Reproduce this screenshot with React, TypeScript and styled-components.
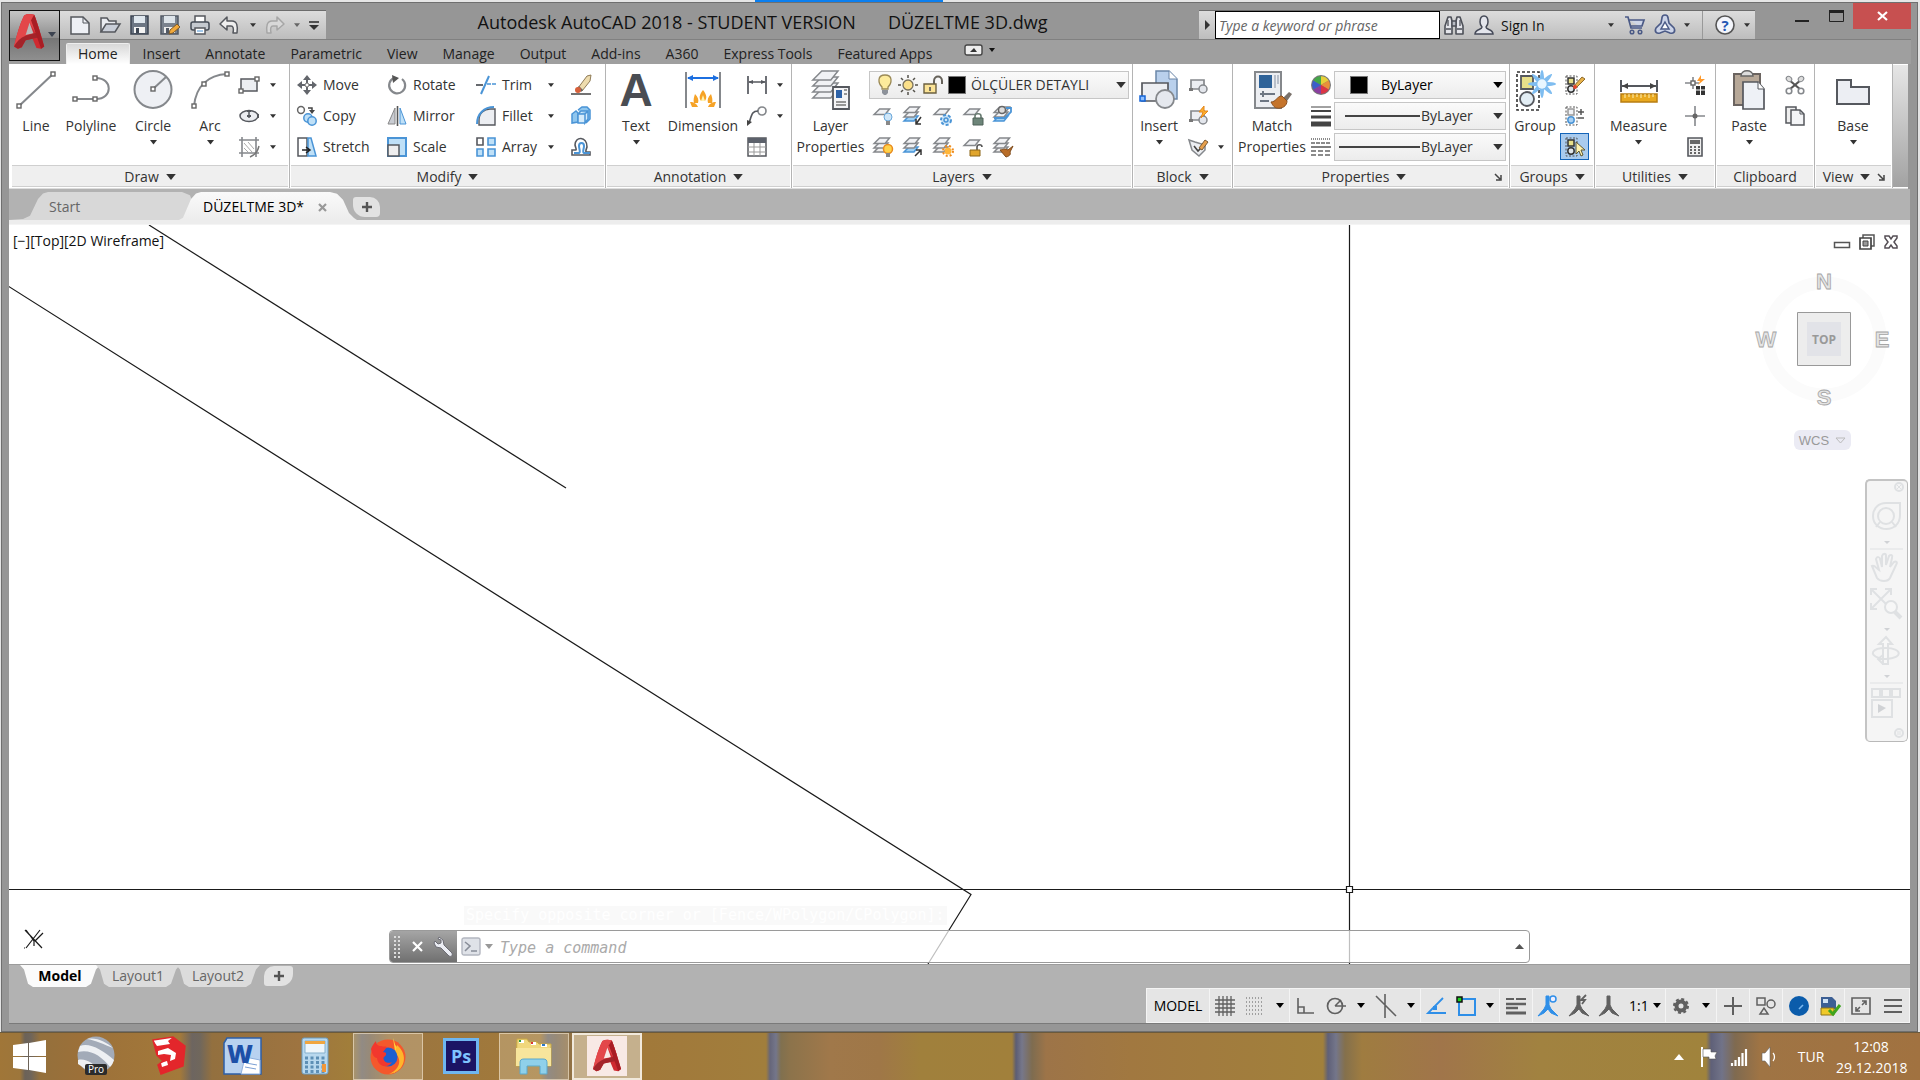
import React from "react";
import styled, { createGlobalStyle, css } from "styled-components";

const ui = `"Open Sans", "Noto Sans", "Liberation Sans", sans-serif`;
const mono = `"DejaVu Sans Mono", "Liberation Mono", monospace`;

const Global = createGlobalStyle`
  *, *::before, *::after { box-sizing: border-box; }
  body { margin: 0; background: #e4e4e4; font-family: ${ui}; font-size: 14px; color: #333; }
  button, input, select { font: inherit; color: inherit; margin: 0; padding: 0; border: 0; background: none; border-radius: 0; }
  svg { display: block; flex: none; overflow: visible; }
`;

/* ---------- shell ---------- */
const Screen = styled.div`
  min-height: 100vh;
  display: flex;
  flex-direction: column;
  background: linear-gradient(90deg, #e6e6e6 755px, #0a7ff0 755px 943px, #e6e6e6 943px) top / 100% 2px no-repeat, #e4e4e4;
`;
const Win = styled.main`
  flex: 1;
  display: flex;
  flex-direction: column;
  margin: 2px 2px 0 1px;
  padding: 0 7px 7px;
  border: 1px solid #6f6f6f;
  background: #969696;
`;
const Header = styled.header`
  display: grid;
  grid-template-columns: 51px 1fr;
  grid-template-rows: 37px 24px;
  margin-right: -1px;
  background: linear-gradient(#969696 36px, #808080 36px 37px, #9f9f9f 37px);
`;
const AppButton = styled.button`
  grid-row: 1 / span 2;
  align-self: end;
  height: 51px;
  margin-bottom: 3px;
  border: 1px solid #111;
  background: linear-gradient(#c6c6c6, #8d8d8d 55%, #767676 56%, #8f8f8f);
  display: flex;
  align-items: flex-start;
  gap: 3px;
  padding: 2px 0 0 4px;
  > svg:last-child { margin-top: 19px; }
`;
const TitleRow = styled.div`
  display: flex;
  align-items: stretch;
  padding-top: 7px;
`;
const barFill = css`
  background: linear-gradient(#dcdcdc, #bdbdbd);
  border-top: 1px solid #6c6c6c;
`;
const QuickAccess = styled.nav`
  ${barFill}
  width: 266px;
  height: 29px;
  display: flex;
  align-items: center;
  padding-left: 8px;
`;
const Tool = styled.button<{ $w?: number }>`
  width: ${(p) => p.$w ?? 30}px;
  height: 28px;
  display: flex;
  align-items: center;
  justify-content: center;
`;
const Title = styled.h1`
  flex: 1;
  margin: 0;
  font-size: 18px;
  line-height: 24px;
  font-weight: 400;
  color: #111;
  display: flex;
  justify-content: center;
  gap: 32px;
  white-space: nowrap;
`;
const InfoCenter = styled.div`
  ${barFill}
  width: 556px;
  height: 29px;
  display: flex;
  align-items: center;
`;
const Search = styled.input`
  width: 225px;
  height: 28px;
  border: 1px solid #000;
  background: #fff;
  padding: 0 3px;
  &::placeholder { color: #666; font-style: italic; opacity: 1; }
`;
const SignIn = styled.button`
  width: 124px;
  height: 28px;
  padding: 0 10px 0 1px;
  display: flex;
  align-items: center;
  justify-content: space-between;
  color: #111;
`;
const InfoDivider = styled.span`
  width: 1px;
  height: 28px;
  background: #999;
  margin: 0 8px 0 12px;
`;
const WindowButtons = styled.div`
  display: flex;
  height: 26px;
  margin: -7px 0 0 30px;
`;
const WindowButton = styled.button<{ $close?: boolean }>`
  width: ${(p) => (p.$close ? 58 : 34)}px;
  display: flex;
  align-items: center;
  justify-content: center;
  background: ${(p) => (p.$close ? "#c75050" : "transparent")};
`;
const RibbonTabs = styled.nav`
  display: flex;
  align-items: flex-end;
  gap: 1px;
  padding-left: 6px;
`;
const RibbonTab = styled.button<{ $on?: boolean }>`
  height: 21px;
  padding: 0 12px;
  line-height: 20px;
  color: #222;
  ${(p) => p.$on && css`background: linear-gradient(#d8d8d8, #fff); border: 1px solid #eee; border-bottom: 0; border-radius: 2px 2px 0 0; padding: 0 11px;`}
`;

/* ---------- ribbon ---------- */
const Ribbon = styled.section`
  display: flex;
  height: 125px;
  margin-right: 2px;
  background: #fff;
  border-bottom: 1px solid #ddd;
`;
const RibbonRest = styled.div`
  flex: 1;
  margin: 1px 0;
  background: linear-gradient(#e6e6e6, #a2a2a2);
`;
const PanelBox = styled.section<{ $w: number }>`
  width: ${(p) => p.$w}px;
  display: grid;
  grid-template-rows: 101px 22px;
  border-right: 1px solid #b4b4b4;
  &:first-child { padding-left: 2px; }
`;
const PanelBody = styled.div`
  display: flex;
  padding: 5px 0 3px;
`;
const PanelTitle = styled.footer`
  margin: 0 1px;
  background: #efefef;
  border-top: 1px solid #cfcfcf;
  border-bottom: 1px solid #cfcfcf;
  display: flex;
  align-items: center;
`;
const PanelMenu = styled.button`
  flex: 1;
  display: flex;
  align-items: center;
  justify-content: center;
  gap: 7px;
  padding-top: 2px;
  line-height: 18px;
`;
const Launcher = styled.button`
  width: 14px;
  padding-top: 2px;
`;
const Big = styled.button<{ $w: number }>`
  width: ${(p) => p.$w}px;
  display: flex;
  flex-direction: column;
  align-items: center;
  line-height: 20px;
  gap: 1px;
`;
const BigIcon = styled.span`
  height: 46px;
  padding-top: 1px;
  display: flex;
  align-items: flex-start;
`;
const BigMore = styled.span`
  padding-top: 3px;
`;
const Column = styled.div<{ $w?: number }>`
  width: ${(p) => (p.$w ? p.$w + "px" : "auto")};
  display: grid;
  grid-template-rows: repeat(3, 31px);
`;
const Small = styled.button`
  display: flex;
  align-items: center;
  gap: 6px;
  white-space: nowrap;
`;
const Split = styled.div`
  display: flex;
  align-items: center;
  justify-content: space-between;
`;
const Toggle = styled.button`
  width: 29px;
  height: 27px;
  display: flex;
  align-items: center;
  justify-content: center;
  border: 1px solid #1464b8;
  background: #a9cbee;
`;
const Center = styled.button`
  display: flex;
  align-items: center;
  justify-content: center;
`;
const Row = styled.div`
  display: flex;
  align-items: center;
`;
const Combo = styled.label<{ $pad?: number }>`
  position: relative;
  flex: 1;
  height: 28px;
  display: flex;
  align-items: center;
  gap: 5px;
  padding-left: ${(p) => p.$pad ?? 0}px;
  border: 1px solid #c6c6c6;
  background: linear-gradient(#fafafa, #ececec);
`;
const ComboSelect = styled.select<{ $dark?: boolean }>`
  flex: 1;
  min-width: 0;
  height: 26px;
  appearance: none;
  outline: 0;
  color: ${(p) => (p.$dark ? "#000" : "#333")};
`;
const ComboArrow = styled.span`
  position: absolute;
  right: 2px;
  top: 10px;
  pointer-events: none;
`;
const Swatch = styled.i<{ $wide?: boolean }>`
  width: 18px;
  height: 18px;
  background: #000;
  outline: 1px solid #777;
  outline-offset: -1px;
  margin-right: ${(p) => (p.$wide ? 8 : 0)}px;
`;
const Rule = styled.i<{ $w: number }>`
  width: ${(p) => p.$w}px;
  height: 2px;
  background: #444;
  margin-right: -4px;
`;

/* ---------- file tabs ---------- */
const FileTabs = styled.nav`
  height: 36px;
  background: linear-gradient(#b2b2b2 31px, #ededed 31px);
  border-bottom: 1px solid #f4f4f4;
  display: flex;
  align-items: flex-start;
  padding-top: 3px;
`;
const FileTab = styled.div<{ $on?: boolean }>`
  height: 28px;
  width: ${(p) => (p.$on ? 178 : 184)}px;
  margin-left: ${(p) => (p.$on ? -14 : 0)}px;
  padding: ${(p) => (p.$on ? "2px 30px 0 24px" : "2px 30px 0 40px")};
  display: flex;
  align-items: center;
  justify-content: space-between;
  background: ${(p) => (p.$on ? "linear-gradient(#fafafa, #ededed)" : "#d8d8d8")};
  color: ${(p) => (p.$on ? "#000" : "#666")};
  clip-path: ${(p) =>
    p.$on
      ? "polygon(0 100%, 4px 92%, 12px 25%, 17px 5%, 22px 0, calc(100% - 27px) 0, calc(100% - 20px) 6%, calc(100% - 14px) 28%, calc(100% - 8px) 75%, calc(100% - 3px) 93%, 100% 100%)"
      : "polygon(0 100%, 14px 96%, 21px 85%, 29px 25%, 34px 5%, 39px 0, calc(100% - 11px) 0, calc(100% - 3px) 12%, 100% 40%, 100% 100%)"};
`;
const PlainButton = styled.button`
  line-height: 20px;
  white-space: nowrap;
`;
const AddFile = styled.button`
  width: 27px;
  height: 20px;
  margin: 5px 0 0 -4px;
  border-radius: 3px 10px 4px 12px;
  background: #e2e2e2;
  display: flex;
  align-items: center;
  justify-content: center;
`;

/* ---------- drawing area ---------- */
const Canvas = styled.section`
  position: relative;
  flex: 1;
  min-height: 600px;
  background: #fff;
  overflow: hidden;
`;
const Drawing = styled.svg`
  position: absolute;
  inset: 0;
  width: 100%;
  height: 100%;
`;
const ViewLabel = styled.button`
  position: absolute;
  left: 4px;
  top: 6px;
  line-height: 20px;
  color: #111;
`;
const ViewButtons = styled.div`
  position: absolute;
  right: 12px;
  top: 8px;
  display: flex;
  gap: 9px;
`;
const Compass = styled.div`
  position: absolute;
  right: 16px;
  top: 44px;
`;
const Wcs = styled.button`
  position: absolute;
  right: 59px;
  top: 205px;
  width: 57px;
  height: 20px;
  border-radius: 6px;
  background: #ebebf4;
  color: #999;
  font: 13px "Liberation Sans", sans-serif;
  display: flex;
  align-items: center;
  justify-content: center;
  gap: 6px;
`;
const NavBar = styled.nav`
  position: absolute;
  right: 2px;
  top: 254px;
  width: 43px;
  height: 263px;
  border: 1px solid #b9b9b9;
  border-left: 2px solid #c4c4c4;
  border-top: 2px solid #c4c4c4;
  border-radius: 5px;
  background: #f5f5f5;
`;
const History = styled.output`
  position: absolute;
  left: 455px;
  bottom: 39px;
  height: 19px;
  padding: 0 2px;
  font: 15px/19px ${mono};
  color: #fff;
  background: #f9f9f9;
`;
const CommandBar = styled.form`
  position: absolute;
  left: 380px;
  right: 380px;
  bottom: 1px;
  height: 33px;
  display: flex;
  align-items: center;
  border: 1px solid #9a9a9a;
  border-radius: 4px;
  overflow: hidden;
  background: rgba(255, 255, 255, 0.72);
`;
const CommandGrip = styled.div`
  width: 67px;
  height: 31px;
  display: flex;
  align-items: center;
  justify-content: space-between;
  padding: 0 4px;
  background: linear-gradient(#a5a5a5, #707070);
`;
const CommandInput = styled.input`
  flex: 1;
  height: 31px;
  outline: 0;
  font: italic 15px ${mono};
  padding: 2px 0 0 7px;
  &::placeholder { color: #aaa; opacity: 1; }
`;

/* ---------- bottom of the window ---------- */
const Bottom = styled.footer`
  height: 60px;
  background: #b2b2b2;
  border-bottom: 1px solid #7a7a7a;
  border-top: 1px solid #9c9c9c;
  display: flex;
  justify-content: space-between;
`;
const LayoutTabs = styled.nav`
  display: flex;
  padding-left: 11px;
`;
const LayoutTab = styled.button<{ $on?: boolean }>`
  height: 22px;
  width: ${(p) => (p.$on ? 80 : 84)}px;
  margin-right: -4px;
  line-height: 20px;
  font-weight: ${(p) => (p.$on ? 700 : 400)};
  color: ${(p) => (p.$on ? "#000" : "#666")};
  background: ${(p) => (p.$on ? "#fbfbfb" : "#dcdcdc")};
  clip-path: polygon(0 0, 100% 0, calc(100% - 4px) 20%, calc(100% - 9px) 85%, calc(100% - 14px) 100%, 13px 100%, 8px 85%, 4px 20%);
`;
const AddLayout = styled.button`
  width: 29px;
  height: 20px;
  margin: 1px 0 0 8px;
  border-radius: 10px 3px 12px 3px;
  background: #e2e2e2;
  display: flex;
  align-items: center;
  justify-content: center;
`;
const StatusBar = styled.div`
  align-self: flex-end;
  height: 35px;
  display: flex;
  gap: 1px;
  background: #f4f4f4;
  border: 1px solid #f4f4f4;
  color: #000;
`;
const StatusGroup = styled.div<{ $w: number }>`
  width: ${(p) => p.$w}px;
  display: flex;
  align-items: center;
  justify-content: space-around;
  background: #e5e5e5;
`;
const StatusButton = styled.button`
  display: flex;
  align-items: center;
  gap: 4px;
  height: 30px;
`;

/* ---------- taskbar ---------- */
const TaskBar = styled.footer`
  height: 48px;
  border-top: 1px solid #6b5a3c;
  display: flex;
  align-items: stretch;
  color: #fff;
  background: linear-gradient(90deg,
    #a07638 0, #9d763b 20px, #6b6258 25px, #6f655a 31px, #94703c 40px, #9c7039 80px, #a3793a 180px,
    #6d6560 192px, #70675c 200px, #93703f 212px, #9e7440 300px, #a17e3a 350px, #6e6a6c 362px, #77695a 370px, #9b7540 390px,
    #a27a3a 540px, #6e6a6c 548px, #77695a 556px, #a17738 580px, #a17a3b 680px, #a17e3c 766px, #66667a 770px, #74768a 776px, #80704f 781px, #8c734b 790px,
    #a0784a 830px, #9f7747 880px, #a0803c 920px, #a1803b 1012px, #5c5d74 1016px, #76778a 1022px, #7e6c50 1032px, #9d7448 1046px,
    #a17840 1130px, #a1803b 1323px, #5f6078 1328px, #74768a 1336px, #84704c 1345px, #9f7c40 1362px, #a0754a 1440px, #a18240 1540px, #a0833c 1706px,
    #5f6078 1711px, #717388 1722px, #7f6a50 1735px, #9f7444 1760px, #a17240 1920px);
`;
const Start = styled.button`
  width: 61px;
  display: flex;
  align-items: center;
  padding: 0 0 1px 13px;
`;
const Task = styled.button<{ $state?: "open" | "active" }>`
  width: 70px;
  margin-right: 3px;
  padding-bottom: 2px;
  border: 0 solid transparent;
  display: flex;
  align-items: center;
  justify-content: center;
  ${(p) => p.$state === "open" && css`background: rgba(230, 215, 190, 0.3); border: 1px solid rgba(240, 225, 200, 0.65);`}
  ${(p) => p.$state === "active" && css`background: #c5b08d; border: 2px solid #f1e9dc;`}
`;
const Tray = styled.div`
  margin-left: auto;
  display: flex;
  align-items: center;
  padding-right: 14px;
`;
const Lang = styled.button`
  width: 50px;
  line-height: 20px;
  margin-left: 2px;
`;
const Clock = styled.time`
  width: 70px;
  line-height: 21px;
  text-align: center;
`;

/* ---------- icons ---------- */
const Ic = ({ w = 20, h = 20, children }: { w?: number; h?: number; children: React.ReactNode }) => (
  <svg width={w} height={h} viewBox={`0 0 ${w} ${h}`} fill="none" aria-hidden="true">{children}</svg>
);
const Down = ({ s = 8, c = "#333" }: { s?: number; c?: string }) => (
  <svg width={s} height={s / 2 + 1} viewBox="0 0 8 5" aria-hidden="true"><path d="M0 0h8L4 5z" fill={c} /></svg>
);
const Node = ({ x, y }: { x: number; y: number }) => (
  <rect x={x - 2} y={y - 2} width="4" height="4" fill="#fff" stroke="#666" strokeWidth="1.4" />
);
const g = "#85888c";
const dk = "#55585e";
const bl = "#4a94d6";
const lb = "#bfe0f7";

const LogoShape = ({ hole }: { hole: string }) => (
  <>
    <path d="M13 3Q18 0 26 2Q29 8 39 43L35 46L29 45L24 33L15 35L10 44L5 46L0 43Q6 17 13 3Z" fill="#cf2a30" />
    <path d="M13 3Q18 0 26 2L33 22L28 26L20 12L14 33L10 44L5 46L0 43Q6 17 13 3Z" fill="#e3474a" />
    <path d="M20 12L25 26L15 28Z" fill={hole} />
    <path d="M0 43Q5 33 15 29L30 25L33 31L15 35L10 44L5 46Z" fill="#a3242a" />
    <path d="M26 2Q29 8 39 43L35 46L22 9Z" fill="#a81d24" />
  </>
);
const LogoA = () => (
  <svg width="31" height="36" viewBox="0 0 40 46" aria-hidden="true"><LogoShape hole="#b9b9b9" /></svg>
);
const PageI = () => <Ic><path d="M1 2h12l6 6v11H1z" fill="#eef0f5" stroke={dk} strokeWidth="1.5" /><path d="M13 2v6h6" stroke={dk} /></Ic>;
const OpenI = () => <Ic><path d="M1 17V3h6l2 3h7v3" fill="#e9ebf0" stroke={dk} strokeWidth="1.5" /><path d="M1 17L6 9h14l-5 8z" fill="#c9ced8" stroke={dk} strokeWidth="1.5" /></Ic>;
const SaveShape = () => <><path d="M1 1h17v18H1z" fill="#6c7684" stroke="#3d4653" strokeWidth="1.5" /><path d="M4 1h11v7H4z" fill="#dfe7ee" /><path d="M4 12h11v6H4z" fill="#f4f4f4" /><path d="M6 13h3v5H6z" fill="#3d4653" /></>;
const SaveI = () => <Ic><SaveShape /></Ic>;
const SaveAsI = () => <Ic><g opacity=".85"><SaveShape /></g><path d="M9 19l1-4 7-6 3 3-7 6z" fill="#f2a93b" stroke="#7c5a2a" /></Ic>;
const PrintI = () => <Ic><path d="M5 7V1h10v6" fill="#fff" stroke={dk} strokeWidth="1.5" /><rect x="1" y="7" width="18" height="8" rx="2" fill="#c5c9cf" stroke="#444b55" strokeWidth="1.5" /><path d="M5 13h10v6H5z" fill="#fff" stroke={dk} strokeWidth="1.5" /><path d="M7 16h6" stroke={bl} /></Ic>;
const undoPath = "M1 9l7-7v4h5c5 0 6 5 5 12h-4c1-5 0-7-2-7H8v4z";
const UndoI = () => <Ic><path d={undoPath} fill="#eee" stroke={dk} strokeWidth="1.5" strokeLinejoin="round" /></Ic>;
const RedoI = () => <Ic><g transform="matrix(-1 0 0 1 20 0)"><path d={undoPath} fill="#d8d8d8" stroke="#a6a6a6" strokeWidth="1.5" strokeLinejoin="round" /></g></Ic>;
const BinocI = () => <Ic><path d="M4 2h3l1 4v13H1v-8zM16 2h-3l-1 4v13h7v-8z" fill="#e4e5ea" stroke="#4d5058" strokeWidth="1.6" strokeLinejoin="round" /><path d="M8 6h4v5H8z" fill="#b9bcc4" stroke="#4d5058" strokeWidth="1.4" /><path d="M2 14h5M13 14h5M4 5v6M16 5v6" stroke="#4d5058" strokeWidth="1.3" /></Ic>;
const UserI = () => <Ic><path d="M6 7c0-8 8-8 8 0 0 3-1 4-2 5 0 3 7 2 7 7H1c0-5 7-4 7-7-1-1-2-2-2-5z" fill="#e3e5ec" stroke="#454a58" strokeWidth="1.5" /></Ic>;
const CartI = () => <Ic><path d="M0 2h3l3 11h11M4 5h15l-2 6H6" fill="#cfd6e8" stroke="#4b5a86" strokeWidth="1.7" /><circle cx="7" cy="17" r="1.8" stroke="#4b5a86" strokeWidth="1.5" /><circle cx="15" cy="17" r="1.8" stroke="#4b5a86" strokeWidth="1.5" /></Ic>;
const ShareI = () => <Ic><path d="M7 3c0-4 6-4 6 0l1 5 5 5c2 4-1 6-4 5l-5-2-5 2c-3 1-6-1-4-5l5-5z" fill="#ccd4e8" stroke="#4b5a86" strokeWidth="1.6" /><path d="M10 7l4 7H6z" fill="#fff" stroke="#4b5a86" strokeWidth="1.5" /></Ic>;
const HelpI = () => <Ic><circle cx="10" cy="10" r="9" fill="#f3f5fb" stroke="#555" strokeWidth="1.6" /><text x="10" y="15.5" textAnchor="middle" fontFamily="Open Sans" fontWeight="700" fontSize="15" fill="#2456b4">?</text></Ic>;

const LineI = () => <Ic w={40} h={40}><path d="M3 36L37 4" stroke={g} strokeWidth="2" /><Node x={3} y={36} /><Node x={37} y={4} /></Ic>;
const PolyI = () => <Ic w={40} h={40}><path d="M5 29h20c17 0 17-21 0-21" stroke={g} strokeWidth="2" /><Node x={4} y={29} /><Node x={24} y={29} /><Node x={24} y={8} /></Ic>;
const CircleI = () => <Ic w={40} h={40}><circle cx="20" cy="19.5" r="18.5" fill="#eef0f4" stroke={g} strokeWidth="2" /><path d="M20 19L33 7" stroke={g} strokeWidth="2" /><Node x={20} y={19} /></Ic>;
const ArcI = () => <Ic w={40} h={40}><path d="M4 36C6 16 18 5 37 4" stroke={g} strokeWidth="2" /><Node x={4} y={36} /><Node x={14} y={14} /><Node x={37} y={4} /></Ic>;
const RectI = () => <Ic><path d="M2 4h16v12H2z" fill="#eceef2" stroke={dk} strokeWidth="1.5" /><Node x={18} y={4} /><Node x={2} y={16} /></Ic>;
const EllI = () => <Ic><ellipse cx="10" cy="10" rx="9" ry="5.5" fill="#eceef2" stroke={dk} strokeWidth="1.5" /><path d="M10 12V5" stroke={dk} strokeWidth="1.5" /><path d="M8 10h4M19 8v4M8 5h4" stroke={dk} strokeWidth="2" /></Ic>;
const HatchI = () => <Ic><path d="M3 0v20M17 0v20M0 3h20M0 16h20" stroke={g} strokeWidth="1.6" /><path d="M5 6l8 9M9 5l6 7M5 11l4 4" stroke="#aaa" /><path d="M20 9c-1 5-4 9-9 11" stroke="#777" strokeWidth="1.4" /></Ic>;

const MoveI = () => <Ic><path d="M10 0l4 5h-3v4h4V6l5 4-5 4v-3h-4v4h3l-4 5-4-5h3v-4H5v3l-5-4 5-4v3h4V5H6z" fill="#63666c" /><circle cx="10" cy="10" r="2" fill="#fff" stroke="#777" /></Ic>;
const CopyI = () => <Ic><circle cx="4" cy="4" r="3.4" stroke="#666" strokeWidth="1.5" /><circle cx="11" cy="12" r="4.2" fill={lb} stroke={bl} strokeWidth="1.5" /><circle cx="15" cy="15" r="4.2" fill={lb} stroke={bl} strokeWidth="1.5" /><path d="M11 2h4v3" stroke="#444" strokeWidth="1.5" /><path d="M12 4h6l-3 4z" fill="#444" /></Ic>;
const StretchI = () => <Ic><path d="M1 1h9v18H1z" fill="#fff" stroke={dk} strokeWidth="1.5" /><path d="M11 1h3l5 18h-8z" fill={lb} stroke={bl} strokeWidth="1.5" /><path d="M5 13h7m-3-3l4 3-4 3" stroke="#222" strokeWidth="1.5" /></Ic>;
const RotateI = () => <Ic><path d="M7 3a8 8 0 1 0 8 1" stroke={g} strokeWidth="2.2" /><path d="M5 0l7 3-6 5z" fill="#555" /></Ic>;
const MirrorI = () => <Ic><path d="M8 2v16H1z" fill="#c9ccd2" stroke="#888" /><path d="M13 2v16h6z" fill={lb} stroke={bl} /><path d="M10.500 0v20" stroke="#555" strokeWidth="1.6" /></Ic>;
const ScaleI = () => <Ic><path d="M1 1h18v18H1z" fill={lb} stroke={bl} strokeWidth="2" /><path d="M1 8h11v11H1z" fill="#eee" stroke={dk} strokeWidth="1.5" /></Ic>;
const TrimI = () => <Ic><path d="M0 10h7" stroke={dk} strokeWidth="1.8" /><path d="M5 19L13 1" stroke={bl} strokeWidth="2" /><path d="M11 9h4m1 0h4" stroke={bl} strokeWidth="1.6" /></Ic>;
const FilletI = () => <Ic><path d="M3 19V14C3 7 8 3 14 3h5v16z" fill="#eceef2" stroke={dk} strokeWidth="1.4" /><path d="M1 18C1 8 8 1 18 1" stroke={bl} strokeWidth="2" /></Ic>;
const ArrayI = () => <Ic><path d="M1 1h6v7H1z" fill="#fff" stroke={dk} strokeWidth="1.6" /><path d="M12 1h7v7h-7zM1 12h6v7H1zM12 12h7v7h-7z" fill={lb} stroke={bl} strokeWidth="1.6" /></Ic>;
const EraseI = () => <Ic><path d="M7 13L16 1l4-1-1 6-8 10z" fill="#eedcae" stroke="#8f7b57" /><path d="M8 11l4 4-2 2-4-4z" fill="#666" /><circle cx="7" cy="15" r="3" fill="#d8603a" /><path d="M0 19h20" stroke="#444" strokeWidth="1.5" /></Ic>;
const ExplodeI = () => <Ic><path d="M1 8l4-3 2 2v9l-6 1zM7 4l4-3h5l3 3v9l-4 4" fill="#8fc6ee" stroke={bl} strokeWidth="1.5" /><path d="M7 8h7v9H7zM14 8l3-3v8l-3 4zM7 8l3-3h7" fill="#d4ebfb" stroke={bl} strokeWidth="1.5" /></Ic>;
const OffsetI = () => <Ic><path d="M1 18h18v-3h-3c-2 0-1-2 0-5C16-1 4-1 4 8c1 4 2 5 0 5H1z" stroke={dk} strokeWidth="1.6" /><path d="M3 16h5c2-1 0-4 0-7 0-4 5-4 5 0 0 3-2 6 0 7h6" stroke={bl} strokeWidth="2" /></Ic>;

const TextI = () => <Ic w={40} h={40}><text x="20" y="36" textAnchor="middle" fontFamily="Liberation Sans" fontWeight="700" fontSize="46" fill="#4a4d53">A</text></Ic>;
const DimI = () => <Ic w={40} h={40}><path d="M3 2v36M37 2v36" stroke={g} strokeWidth="2" /><path d="M5 8h30" stroke="#1c6fe0" strokeWidth="2" /><path d="M4 8l6-3v6zM36 8l-6-3v6z" fill="#1c6fe0" /><path d="M20 20c4 5 4 8 2 11h-4c-2-3-2-6 2-11zM12 24c3 3 4 6 3 9h-4c-1-3 0-6 1-9zM28 24c-3 3-4 6-3 9h4c1-3 0-6-1-9zM7 32c4 0 7 2 8 5H9zM33 32c-4 0-7 2-8 5h6z" fill="#f6a327" /><path d="M20 25l2 6h-4z" fill="#fff3b0" /></Ic>;
const HDimI = () => <Ic><path d="M1 1v18M19 1v18M2 7h16" stroke={dk} strokeWidth="1.7" /><path d="M1 7l5-2v4zM19 7l-5-2v4z" fill={dk} /></Ic>;
const LeaderI = () => <Ic><circle cx="15" cy="5" r="4" stroke={g} strokeWidth="1.7" /><path d="M11 5C5 5 5 8 2 17" stroke={dk} strokeWidth="1.7" /><path d="M0 20l0-6 5 2z" fill="#444" /></Ic>;
const TableI = () => <Ic><path d="M1 1h18v18H1z" fill="#fff" stroke={dk} strokeWidth="1.5" /><path d="M1 1h18v5H1z" fill="#5c616b" /><path d="M7 6v13M13 6v13M1 10h18M1 15h18" stroke="#999" /></Ic>;

const sheet = (y: number, k: number, fill = "#f1f2f5", stroke = g) => <path d={`M${1 * k} ${y + 5 * k}L${6 * k} ${y}H${15 * k}L${11 * k} ${y + 5 * k}Z`} fill={fill} stroke={stroke} strokeWidth="1.5" />;
const LayerPropI = () => <Ic w={40} h={40}>{sheet(19, 1.8)}{sheet(13, 1.8)}{sheet(7, 1.8)}{sheet(1, 1.8)}<path d="M22 17h16v22H22z" fill="#f4f4f6" stroke={dk} strokeWidth="1.8" /><path d="M25 20h6v8h-6z" fill="#2d62a8" /><path d="M33 20h3M33 24h3M25 32h10M25 35h10" stroke="#777" strokeWidth="1.4" /></Ic>;
const LayerI = ({ n, kind, blue }: { n: number; kind: string; blue?: boolean }) => (
  <Ic>
    {n === 3 && sheet(10, 1, blue ? "#9ed0f4" : "#eee", blue ? bl : g)}
    {n === 3 && sheet(6, 1)}
    {sheet(n === 3 ? 1 : 3, 1.1)}
    {kind === "off" && <><circle cx="15" cy="11" r="4" fill="#cfe6f8" stroke="#6aa7da" /><path d="M13 15h4v4h-4z" fill="#888" /></>}
    {kind === "on" && <><circle cx="15" cy="12" r="4.500" fill="#ffd24a" stroke="#e98b1e" strokeWidth="1.5" /><path d="M13 16h4v4h-4z" fill="#888" /></>}
    {kind === "in" && <path d="M18 11l-5 7m0-5v5h5" stroke="#333" strokeWidth="1.5" />}
    {kind === "out" && <path d="M12 19l6-6m-5 0h5v5" stroke="#333" strokeWidth="1.5" />}
    {kind === "freeze" && <><circle cx="13" cy="14" r="5" fill="#cde5f7" stroke={bl} strokeWidth="2" strokeDasharray="3 2" /><circle cx="13" cy="14" r="2" stroke={bl} strokeWidth="1.5" /></>}
    {kind === "sun" && <><circle cx="15" cy="14" r="5" stroke="#f08a1c" strokeWidth="2" strokeDasharray="2 2" /><circle cx="15" cy="14" r="3.5" fill="#ffb63a" /></>}
    {kind === "lock" && <><path d="M12 13v-3c0-3 6-3 6 0v3" stroke="#667a70" strokeWidth="1.6" /><path d="M10 12h10v7H10z" fill="#6d8579" stroke="#4f6158" /></>}
    {kind === "unlock" && <><path d="M14 14v-4c0-3 5-3 5 0" stroke="#555" strokeWidth="1.6" /><path d="M7 13h10v6H7z" fill="#e0a52c" stroke="#8a6417" /></>}
    {kind === "brush" && <path d="M20 9l-5 4c-4-2-5 0-8 0l6 7c4-1 5-3 4-5z" fill="#b96d28" stroke="#7d4a1b" />}
    {kind === "cur" && <><circle cx="9" cy="4" r="3.500" fill="#ddd" stroke="#666" strokeWidth="1.5" /><path d="M1 12h11l6-6V2h-5" stroke={bl} strokeWidth="1.8" /></>}
  </Ic>
);
const BulbI = () => <Ic w={16} h={22}><path d="M8 1c8 0 7 8 3 12v2H5v-2C1 9 0 1 8 1z" fill="#fdeb9c" stroke="#9b8a57" strokeWidth="1.3" /><path d="M5 16h6v3l-2 2H7l-2-2z" fill="#8d929a" /></Ic>;
const SunI = () => <Ic><circle cx="10" cy="10" r="5" fill="#fbe08a" stroke="#77705c" strokeWidth="1.3" /><path d="M10 0v3M10 17v3M0 10h3M17 10h3M3 3l2 2M15 15l2 2M3 17l2-2M15 5l2-2" stroke="#55534c" strokeWidth="1.5" /></Ic>;
const UnlockI = () => <Ic><path d="M11 9V6c0-6 8-6 8 0v3" stroke="#66625a" strokeWidth="2" /><path d="M1 9h12v9H1z" fill="#fbe396" stroke="#6b6040" strokeWidth="1.4" /><path d="M7 12v4" stroke="#555" strokeWidth="1.6" /></Ic>;

const InsertI = () => <Ic w={40} h={40}><path d="M17 1h13l8 8v20H17z" fill="#b9d0ec" stroke="#6b86a8" strokeWidth="1.5" /><path d="M30 1v8h8" fill="#fff" stroke="#6b86a8" /><path d="M3 13h26v18H3z" fill="#eceef2" stroke={dk} strokeWidth="1.7" /><circle cx="26" cy="29" r="9" fill="#e5e8ee" stroke={g} strokeWidth="1.8" /><path d="M1 26h5v5H1z" fill="#8fc0ff" stroke="#1464d8" strokeWidth="1.500" /></Ic>;
const BlockI = ({ kind }: { kind: string }) => (
  <Ic>{kind === "attr"
    ? <><path d="M1 3l3 10 7 6 6-6V8L7 5z" fill="#eceef2" stroke={g} strokeWidth="1.5" /><path d="M6 9l4 5 3-3" stroke="#444" strokeWidth="1.6" /><path d="M11 11l6-8 3 2-6 8z" fill="#e7a04c" stroke="#7b5a33" /></>
    : <><path d="M3 5h13v9H3z" fill="#eceef2" stroke={g} strokeWidth="1.7" /><circle cx="15" cy="14" r="4" fill="#e3e6ec" stroke={g} strokeWidth="1.5" /><path d="M1 13h4v3H1z" fill="#777" />{kind === "new" && <path d="M16 0l-5 6h4l-2 6 7-7h-4z" fill="#ffae2b" stroke="#e1861c" />}</>}
  </Ic>
);
const MatchI = () => <Ic w={40} h={40}><path d="M3 2h26v36H3z" fill="#eceef2" stroke={g} strokeWidth="2" /><path d="M7 5h13v13H7z" fill="#2f6399" /><path d="M23 5v13M26 5v9" stroke="#b8bfca" strokeWidth="2" /><path d="M8 24h15M11 21v6M8 31h9" stroke="#6d7683" strokeWidth="2" /><path d="M31 28l6-6 3 2-5 7z" fill="#79716a" /><path d="M19 32c5 0 6-6 11-6l5 5c0 5-5 8-10 7-2 0-4-2-6-6z" fill="#c5742b" stroke="#8a4f1e" /></Ic>;
const WheelI = () => {
  const c = ["#e7d03a", "#e9913a", "#dc3545", "#8a3fa0", "#3b5fc9", "#44a848"];
  return <Ic><circle cx="10" cy="10" r="10" fill="#777" />{c.map((f, i) => {
    const a = ((i * 60 - 90) * Math.PI) / 180, b = a + Math.PI / 3;
    return <path key={f} fill={f} d={`M10 10L${10 + 8.8 * Math.cos(a)} ${10 + 8.8 * Math.sin(a)}A8.8 8.8 0 0 1 ${10 + 8.8 * Math.cos(b)} ${10 + 8.8 * Math.sin(b)}Z`} />;
  })}</Ic>;
};
const WeightI = () => <Ic><path d="M0 1h20" stroke="#444" strokeWidth="1" /><path d="M0 5h20" stroke="#444" strokeWidth="2" /><path d="M0 11h20" stroke="#444" strokeWidth="3" /><path d="M0 18h20" stroke="#444" strokeWidth="5" /></Ic>;
const TypeI = () => <Ic><path d="M0 2h20" stroke="#666" strokeWidth="1.5" strokeDasharray="1 1" /><path d="M0 6h20" stroke="#666" strokeWidth="1.5" strokeDasharray="4 1" /><path d="M0 10h20" stroke="#555" strokeWidth="1.5" /><path d="M0 14h20M0 18h20" stroke="#666" strokeWidth="1.5" strokeDasharray="5 2" /></Ic>;

const Star = ({ x, y, r }: { x: number; y: number; r: number }) => <>{[0, 45, 90, 135].map((a) => <ellipse key={a} cx={x} cy={y} rx={r} ry={r / 6} fill="#7fbdf0" transform={`rotate(${a} ${x} ${y})`} />)}<circle cx={x} cy={y} r={r / 3} fill="#e8f6ff" /></>;
const GroupI = () => <Ic w={40} h={40}><path d="M2 2h22v38H2z" stroke="#333" strokeWidth="1.6" strokeDasharray="3 2" /><path d="M6 6h12v13H6z" fill="#e8e08a" stroke={dk} strokeWidth="1.8" /><circle cx="12" cy="29" r="7" fill="#e3eef5" stroke={dk} strokeWidth="1.8" /><Star x={27} y={14} r={14} /></Ic>;
const GroupSmI = ({ kind }: { kind: string }) => (
  <Ic>
    <path d="M1 1h11v18H1z" stroke="#555" strokeDasharray="2 1.500" />
    <path d="M3 3h6v6H3z" fill={kind === "pm" ? "#e4e8ee" : "#e8e08a"} stroke="#333" strokeWidth="1.5" opacity={kind === "pm" ? 0.5 : 1} />
    <circle cx="6" cy="14" r="3.200" fill={kind === "pm" ? "#a9d0f2" : "#dfe5ea"} stroke={kind === "pm" ? bl : "#333"} strokeWidth="1.5" />
    {kind === "edit" && <path d="M8 12L17 2l3 2-9 9z" fill="#e8b24a" stroke="#8d6a2c" />}
    {kind === "edit" && <circle cx="10" cy="12" r="2" fill="#e3452f" />}
    {kind === "pm" && <path d="M13 6h6M16 3v6M13 12h6" stroke="#555" strokeWidth="1.5" />}
    {kind === "sel" && <path d="M11 5v12l3-3 2 5 2-1-2-5h4z" fill="#fff3b0" stroke="#5d5633" />}
  </Ic>
);
const MeasureI = () => <Ic w={40} h={40}><path d="M2 10v12M38 10v12M3 16h34" stroke={dk} strokeWidth="2" /><path d="M3 16l6-3v6zM37 16l-6-3v6z" fill="#444" /><path d="M2 24h36v8H2z" fill="#e9a91f" stroke="#b87d12" strokeWidth="1.5" /><path d="M6 24v4M10 24v3M14 24v4M18 24v3M22 24v4M26 24v3M30 24v4M34 24v3" stroke="#fff0b5" /></Ic>;
const QuickI = () => <Ic><path d="M0 8h14M8 2v12" stroke={g} strokeWidth="1.6" /><Node x={8} y={8} /><path d="M16 0l-4 6h3l-2 4 7-6h-4z" fill="#ff9a2b" /><path d="M11 11h9v9h-9z" fill="#333" /><path d="M15.500 11v9M11 15h9" stroke="#fff" /></Ic>;
const PointI = () => <Ic><path d="M0 10h20M10 0v20" stroke={g} strokeWidth="1.6" /><circle cx="10" cy="10" r="2.500" fill="#666" /></Ic>;
const CalcSmI = () => <Ic><path d="M3 1h14v18H3z" fill="#eee" stroke={dk} strokeWidth="1.6" /><path d="M5 3h10v4H5z" fill="#666" /><path d="M5 10h10M5 13h10M5 16h10" stroke="#666" strokeWidth="2" strokeDasharray="2 2" /></Ic>;
const PasteI = () => <Ic w={40} h={40}><path d="M5 4h26v31H5z" fill="#b7a898" stroke="#6b6460" strokeWidth="2" /><path d="M12 6c0-7 12-7 12 0z" fill="#ddd" stroke="#666" strokeWidth="1.5" /><path d="M14 12h15l6 7v20H14z" fill="#eef1f6" stroke={dk} strokeWidth="1.7" /><path d="M29 12v7h6" fill="#fff" stroke={dk} /></Ic>;
const CutI = () => <Ic><path d="M3 4l13 11M17 4L4 15" stroke="#555" strokeWidth="2.2" /><ellipse cx="4" cy="4" rx="3" ry="2.400" transform="rotate(40 4 4)" fill="#ddd" stroke={g} /><ellipse cx="16" cy="4" rx="3" ry="2.400" transform="rotate(-40 16 4)" fill="#ddd" stroke={g} /><circle cx="4" cy="16" r="2.800" fill="#fff" stroke={g} strokeWidth="1.6" /><circle cx="16" cy="16" r="2.800" fill="#fff" stroke={g} strokeWidth="1.6" /></Ic>;
const DupI = () => <Ic><path d="M1 1h10v16H1z" fill="#eee" stroke={dk} strokeWidth="1.5" /><path d="M6 4h9l4 4v11H6z" fill="#f4f5f7" stroke={dk} strokeWidth="1.5" /><path d="M15 4v4h4" stroke={dk} /></Ic>;
const BaseI = () => <Ic w={40} h={40}><path d="M4 10h14v7h18v17H4z" fill="#eceef3" stroke={dk} strokeWidth="2" /></Ic>;
const Launch = () => <Ic w={8} h={8}><path d="M1 1l5 5M7 2v5H2" stroke="#444" strokeWidth="1.5" /></Ic>;
const Plus = () => <Ic w={12} h={12}><path d="M6 1v10M1 6h10" stroke="#555" strokeWidth="2.4" /></Ic>;

/* ---------- parts ---------- */
const Panel = ({ w, name, menu = true, launch, children }: { w: number; name: string; menu?: boolean; launch?: boolean; children: React.ReactNode }) => (
  <PanelBox $w={w} aria-label={name}>
    <PanelBody>{children}</PanelBody>
    <PanelTitle>
      <PanelMenu>{name}{menu && <Down s={10} />}</PanelMenu>
      {launch && <Launcher aria-label={`${name} settings`}><Launch /></Launcher>}
    </PanelTitle>
  </PanelBox>
);
const BigTool = ({ w, icon, label, more, second }: { w: number; icon: React.ReactNode; label: string; more?: boolean; second?: string }) => (
  <Big $w={w}>
    <BigIcon>{icon}</BigIcon>
    <span>{label}</span>
    {more && <BigMore><Down s={7} /></BigMore>}
    {second && <span>{second}</span>}
  </Big>
);
const Pair = ({ label, icon, name }: { label?: string; icon: React.ReactNode; name: string }) => (
  <Split><Small aria-label={name}>{icon}{label}</Small><button aria-label={`${name} options`}><Down s={6} /></button></Split>
);
const GapCol = styled(Column)<{ $left: number }>`
  margin-left: ${(p) => p.$left}px;
`;
const LayerStack = styled.div`
  width: 260px;
  display: grid;
  grid-template-rows: repeat(3, 31px);
`;
const IconStrip = styled.div`
  display: flex;
  align-items: center;
  gap: 10px;
  padding-left: 4px;
`;
const PropRows = styled.div`
  width: 195px;
  display: grid;
  grid-template-rows: repeat(3, 31px);
  ${Row} { gap: 3px; }
`;

const st = "#606060";
const on = "#2f8fe8";
const Anno = ({ c, kind }: { c: string; kind?: number }) => <Ic w={22} h={24}><path d="M9 2h3v9l2 4 7 7-7-3-3-4-4 4-6 3 6-7 2-4z" fill={c} stroke={c} />{kind === 1 && <circle cx="16" cy="5" r="3" fill="#eef" stroke={c} strokeWidth="1.5" />}{kind === 2 && <path d="M18 1l-5 5h4l-3 4" stroke={c} strokeWidth="1.8" />}</Ic>;

const NavDrawing = () => (
  <svg width="40" height="259" viewBox="0 0 40 259" fill="none" stroke="#dfe1e3" strokeWidth="2" role="img" aria-label="Navigation tools">
    <circle cx="32" cy="6" r="4" /><path d="M30 4l4 4M34 4l-4 4" strokeWidth="1" />
    <path d="M19 22h14v12c0 19-27 18-27 1C6 27 12 22 19 22z" /><circle cx="19" cy="35" r="8" /><path d="M13 41l-4 5M25 41l4 5" />
    <path d="M17 60h6l-3 3z" fill="#d0d2d5" stroke="none" /><path d="M3 68h33" strokeWidth="1" />
    <path d="M5 85c3-1 4 2 7 4l-3-11c1-3 4-2 4 0l2 8V75c1-3 4-3 4 0v9l3-9c2-2 4-1 3 2l-2 9 4-5c2-1 4 0 2 3l-6 13c-2 4-10 4-13 0z" />
    <path d="M5 109l18 18M5 127l18-18M4 114v-6h6M18 108h6v6M4 122v6h6" /><circle cx="24" cy="126" r="6" fill="#f7f7f7" /><path d="M28 131l6 6" strokeWidth="4" />
    <path d="M17 147h6l-3 3z" fill="#d0d2d5" stroke="none" />
    <path d="M16 183v-20h-4l7-7 6 7h-4v20z" fill="#f7f7f7" /><path d="M12 177c-10-3-8-10 7-10 16 0 18 10 0 11h-7m4-4l-5 4 5 5" />
    <path d="M17 194h6l-3 3z" fill="#d0d2d5" stroke="none" /><path d="M3 202h33" strokeWidth="1" />
    <path d="M5 208h8v8H5zM15 208h8v8h-8zM25 208h8v8h-8zM5 219h20v17H5z" /><path d="M11 223l8 4-8 5z" fill="#d0d2d5" stroke="none" />
    <circle cx="32" cy="252" r="4" /><path d="M30 251h4M30 253h4" strokeWidth="1" />
  </svg>
);

const tabs = ["Home", "Insert", "Annotate", "Parametric", "View", "Manage", "Output", "Add-ins", "A360", "Express Tools", "Featured Apps"];

export default function App() {
  return (
    <Screen>
      <Global />
      <Win>
        <Header>
          <AppButton aria-label="Application menu"><LogoA /><Down s={8} c="#3c4350" /></AppButton>
          <TitleRow>
            <QuickAccess aria-label="Quick access">
              <Tool $w={24} aria-label="New"><PageI /></Tool>
              <Tool $w={36} aria-label="Open"><OpenI /></Tool>
              <Tool $w={24} aria-label="Save"><SaveI /></Tool>
              <Tool $w={36} aria-label="Save As"><SaveAsI /></Tool>
              <Tool $w={24} aria-label="Plot"><PrintI /></Tool>
              <Tool $w={34} aria-label="Undo"><UndoI /></Tool>
              <Tool $w={14} aria-label="Undo list"><Down s={6} /></Tool>
              <Tool $w={30} aria-label="Redo"><RedoI /></Tool>
              <Tool $w={14} aria-label="Redo list"><Down s={6} c="#666" /></Tool>
              <Tool $w={20} aria-label="Customize"><Ic w={10} h={9}><path d="M0 1h10" stroke="#333" strokeWidth="1.6" /><path d="M0 4h10L5 9z" fill="#333" /></Ic></Tool>
            </QuickAccess>
            <Title><span>Autodesk AutoCAD 2018 - STUDENT VERSION</span><span>DÜZELTME 3D.dwg</span></Title>
            <InfoCenter>
              <Tool $w={16} aria-label="Collapse search"><Ic w={6} h={10}><path d="M1 0v10l5-5z" fill="#333" /></Ic></Tool>
              <Search aria-label="Search" placeholder="Type a keyword or phrase" />
              <Tool $w={28} aria-label="Find"><BinocI /></Tool>
              <Tool $w={32} aria-label="Account"><UserI /></Tool>
              <SignIn>Sign In<Down s={6} /></SignIn>
              <Tool $w={22} aria-label="App store"><CartI /></Tool>
              <Tool $w={38} aria-label="A360"><ShareI /></Tool>
              <Tool $w={6} aria-label="A360 menu"><Down s={6} /></Tool>
              <InfoDivider />
              <Tool $w={28} aria-label="Help"><HelpI /></Tool>
              <Tool $w={16} aria-label="Help menu"><Down s={6} /></Tool>
            </InfoCenter>
            <WindowButtons>
              <WindowButton aria-label="Minimize"><Ic w={14} h={14}><path d="M0 12h14" stroke="#222" strokeWidth="2" /></Ic></WindowButton>
              <WindowButton aria-label="Restore"><Ic w={15} h={12}><path d="M.5.5h14v11H.5z" stroke="#222" /><path d="M0 1.500h15" stroke="#222" strokeWidth="3" /></Ic></WindowButton>
              <WindowButton $close aria-label="Close"><Ic w={11} h={10}><path d="M1 1l9 8M10 1L1 9" stroke="#fff" strokeWidth="2.200" /></Ic></WindowButton>
            </WindowButtons>
          </TitleRow>
          <RibbonTabs>
            {tabs.map((t, i) => <RibbonTab key={t} $on={i === 0}>{t}</RibbonTab>)}
            <Tool $w={68} aria-label="Minimize ribbon">
              <Ic w={30} h={12}><rect x="1" y="1" width="17" height="10" rx="2" fill="#eee" stroke="#444" strokeWidth="1.400" /><path d="M6 8h7l-3-4z" fill="#333" /><path d="M25 4h6l-3 4z" fill="#111" /></Ic>
            </Tool>
          </RibbonTabs>
        </Header>

        <Ribbon>
          <Panel w={281} name="Draw">
            <BigTool w={50} icon={<LineI />} label="Line" />
            <BigTool w={60} icon={<PolyI />} label="Polyline" />
            <BigTool w={64} icon={<CircleI />} label="Circle" more />
            <BigTool w={50} icon={<ArcI />} label="Arc" more />
            <GapCol $left={4} $w={37}>
              <Pair name="Rectangle" icon={<RectI />} /><Pair name="Ellipse" icon={<EllI />} /><Pair name="Hatch" icon={<HatchI />} />
            </GapCol>
          </Panel>
          <Panel w={316} name="Modify">
            <GapCol $left={7} $w={90}><Small><MoveI />Move</Small><Small><CopyI />Copy</Small><Small><StretchI />Stretch</Small></GapCol>
            <Column $w={89}><Small><RotateI />Rotate</Small><Small><MirrorI />Mirror</Small><Small><ScaleI />Scale</Small></Column>
            <Column $w={78}><Pair name="Trim" icon={<TrimI />} label="Trim" /><Pair name="Fillet" icon={<FilletI />} label="Fillet" /><Pair name="Array" icon={<ArrayI />} label="Array" /></Column>
            <GapCol $left={17}><Small aria-label="Erase"><EraseI /></Small><Small aria-label="Explode"><ExplodeI /></Small><Small aria-label="Offset"><OffsetI /></Small></GapCol>
          </Panel>
          <Panel w={186} name="Annotation">
            <BigTool w={60} icon={<TextI />} label="Text" more />
            <BigTool w={74} icon={<DimI />} label="Dimension" />
            <GapCol $left={7} $w={36}>
              <Pair name="Linear" icon={<HDimI />} /><Pair name="Leader" icon={<LeaderI />} /><Small aria-label="Table"><TableI /></Small>
            </GapCol>
          </Panel>
          <Panel w={341} name="Layers">
            <BigTool w={77} icon={<LayerPropI />} label="Layer" second="Properties" />
            <LayerStack>
              <Row>
                <Combo $pad={7}><BulbI /><SunI /><UnlockI /><Swatch />
                  <ComboSelect aria-label="Current layer"><option>ÖLÇÜLER DETAYLI</option></ComboSelect><ComboArrow><Down s={10} /></ComboArrow></Combo>
              </Row>
              <IconStrip>{[["off", 1], ["in", 3, 1], ["freeze", 1], ["lock", 1], ["cur", 3, 1]].map(([k, n, b]) => <button key={k} aria-label={`Layer ${k}`}><LayerI kind={k as string} n={n as number} blue={!!b} /></button>)}</IconStrip>
              <IconStrip>{[["on", 3], ["out", 3, 1], ["sun", 3], ["unlock", 1], ["brush", 3]].map(([k, n, b]) => <button key={k} aria-label={`Layer ${k}`}><LayerI kind={k as string} n={n as number} blue={!!b} /></button>)}</IconStrip>
            </LayerStack>
          </Panel>
          <Panel w={100} name="Block">
            <BigTool w={52} icon={<InsertI />} label="Insert" more />
            <GapCol $left={3} $w={36}><Small aria-label="Create block"><BlockI kind="create" /></Small><Small aria-label="Edit block"><BlockI kind="new" /></Small><Pair name="Attributes" icon={<BlockI kind="attr" />} /></GapCol>
          </Panel>
          <Panel w={277} name="Properties" launch>
            <BigTool w={78} icon={<MatchI />} label="Match" second="Properties" />
            <PropRows>
              <Row><WheelI /><Combo $pad={15}><Swatch $wide /><ComboSelect $dark aria-label="Object color"><option>ByLayer</option></ComboSelect><ComboArrow><Down s={10} c="#000" /></ComboArrow></Combo></Row>
              <Row><WeightI /><Combo $pad={10}><Rule $w={75} /><ComboSelect aria-label="Lineweight"><option>ByLayer</option></ComboSelect><ComboArrow><Down s={10} /></ComboArrow></Combo></Row>
              <Row><TypeI /><Combo $pad={4}><Rule $w={81} /><ComboSelect aria-label="Linetype"><option>ByLayer</option></ComboSelect><ComboArrow><Down s={10} /></ComboArrow></Combo></Row>
            </PropRows>
          </Panel>
          <Panel w={85} name="Groups">
            <BigTool w={50} icon={<GroupI />} label="Group" />
            <Column $w={30}><Center aria-label="Edit group"><GroupSmI kind="edit" /></Center><Center aria-label="Add to group"><GroupSmI kind="pm" /></Center><Row><Toggle aria-label="Group selection" aria-pressed="true"><GroupSmI kind="sel" /></Toggle></Row></Column>
          </Panel>
          <Panel w={121} name="Utilities">
            <BigTool w={87} icon={<MeasureI />} label="Measure" more />
            <GapCol $left={3}><Small aria-label="Quick select"><QuickI /></Small><Small aria-label="Point"><PointI /></Small><Small aria-label="Calculator"><CalcSmI /></Small></GapCol>
          </Panel>
          <Panel w={99} name="Clipboard" menu={false}>
            <BigTool w={66} icon={<PasteI />} label="Paste" more />
            <GapCol $left={3}><Small aria-label="Cut"><CutI /></Small><Small aria-label="Copy clip"><DupI /></Small></GapCol>
          </Panel>
          <Panel w={78} name="View" launch>
            <BigTool w={76} icon={<BaseI />} label="Base" more />
          </Panel>
          <RibbonRest />
        </Ribbon>

        <FileTabs>
          <FileTab><PlainButton>Start</PlainButton></FileTab>
          <FileTab $on><PlainButton>DÜZELTME 3D*</PlainButton><button aria-label="Close drawing"><Ic w={9} h={9}><path d="M1 1l7 7M8 1L1 8" stroke="#999" strokeWidth="2.200" /></Ic></button></FileTab>
          <AddFile aria-label="New drawing"><Plus /></AddFile>
        </FileTabs>

        <Canvas>
          <Drawing aria-hidden="true" fill="none" stroke="#1a1a1a" strokeWidth="1.2">
            <path d="M140 0L557 263" />
            <path d="M-1 61L962 669.500L919 739" />
            <path d="M1340.500 0V661M1340.500 668V739" />
            <path d="M0 664.500H1337M1344 664.500H2600" />
            <path d="M1337.500 661.500h6v6h-6z" />
            <path d="M16 705l17 18M31 705l-14 18M34 708l-8 8M17 705l8 11v5M15 723h1" />
          </Drawing>
          <ViewLabel>[−][Top][2D Wireframe]</ViewLabel>
          <ViewButtons>
            <button aria-label="Minimize view"><Ic w={16} h={18}><path d="M.5 9.500h15v5H.5z" fill="#fff" stroke="#555" strokeWidth="1.500" /></Ic></button>
            <button aria-label="Restore view"><Ic w={16} h={18}><path d="M4 2h11v11H4z" fill="#fff" stroke="#555" strokeWidth="1.500" /><path d="M1 5h11v11H1z" fill="#fff" stroke="#444" strokeWidth="1.700" /><path d="M4 8h5v5H4z" fill="#999" stroke="#444" /></Ic></button>
            <button aria-label="Close view"><Ic w={14} h={18}><path d="M1 3h4l2 3 2-3h4v2l-3 4 3 4v2H9l-2-3-2 3H1v-2l3-4-3-4z" fill="#fff" stroke="#554f55" strokeWidth="1.500" /></Ic></button>
          </ViewButtons>
          <Compass>
            <svg width="140" height="140" viewBox="0 0 140 140" role="img" aria-label="View cube">
              <circle cx="70" cy="70" r="56" fill="none" stroke="#fbfbfb" strokeWidth="13" />
              <path d="M43.500 43.500h53v53h-53z" fill="#ededed" stroke="#999" />
              <path d="M53 53h34v34H53z" fill="#e2e3e8" />
              <text x="70" y="75" textAnchor="middle" fontFamily="Open Sans" fontWeight="700" fontSize="12" fill="#999">TOP</text>
              <g fontFamily="Liberation Sans" fontWeight="700" fontSize="22" fill="#e4e4e4" stroke="#a5a5a5" strokeWidth=".8" textAnchor="middle">
                <text x="70" y="20">N</text><text x="70" y="136">S</text><text x="12" y="78">W</text><text x="128" y="78">E</text>
              </g>
            </svg>
          </Compass>
          <Wcs>WCS<Ic w={11} h={7}><path d="M1 1h9L5.500 6z" stroke="#bbb" /></Ic></Wcs>
          <NavBar aria-label="Navigation bar"><NavDrawing /></NavBar>
          <History>Specify opposite corner or [Fence/WPolygon/CPolygon]:</History>
          <CommandBar onSubmit={(e) => e.preventDefault()}>
            <CommandGrip>
              <Ic w={7} h={22}><path d="M1 0v22M5 0v22" stroke="#ddd" strokeWidth="2" strokeDasharray="2 2" /></Ic>
              <button type="button" aria-label="Close command line"><Ic w={11} h={11}><path d="M1 1l9 9M10 1l-9 9" stroke="#fff" strokeWidth="2.200" /></Ic></button>
              <button type="button" aria-label="Customize command line"><Ic><path d="M6 0l4 3 1 5 8 8c1 3-1 4-3 3l-8-8-5-1-2-4 1-2 3 3 3-1V3L5 2z" fill="#eceef4" stroke="#6c6c74" strokeLinejoin="round" /></Ic></button>
            </CommandGrip>
            <Tool as="span" $w={28}><Ic><rect x="1" y="1" width="18" height="17" rx="2" fill="#dfe2e8" stroke="#b3b7c0" strokeWidth="1.400" /><path d="M4 5l5 4-5 5M10 14h6" stroke="#888d98" strokeWidth="1.600" /></Ic></Tool>
            <Down s={8} c="#999" />
            <CommandInput aria-label="Command" placeholder="Type a command" />
            <Tool type="button" $w={20} aria-label="Command history"><Ic w={9} h={5}><path d="M0 5h9L4.500 0z" fill="#555" /></Ic></Tool>
          </CommandBar>
        </Canvas>

        <Bottom>
          <LayoutTabs>
            <LayoutTab $on>Model</LayoutTab><LayoutTab>Layout1</LayoutTab><LayoutTab>Layout2</LayoutTab>
            <AddLayout aria-label="New layout"><Plus /></AddLayout>
          </LayoutTabs>
          <StatusBar>
            <StatusGroup $w={62}><StatusButton>MODEL</StatusButton></StatusGroup>
            <StatusGroup $w={79}>
              <StatusButton aria-label="Grid"><Ic><path d="M4 0v20M8 0v20M12 0v20M16 0v20M0 4h20M0 8h20M0 12h20M0 16h20" stroke={st} strokeWidth="1.300" /></Ic></StatusButton>
              <StatusButton aria-label="Snap"><Ic><path d="M1 2h18M1 6h18M1 10h18M1 14h18M1 18h18" stroke="#888" strokeWidth="1.300" strokeDasharray="1 2" /></Ic></StatusButton>
              <StatusButton aria-label="Snap options"><Down s={8} c="#000" /></StatusButton>
            </StatusGroup>
            <StatusGroup $w={130}>
              <StatusButton aria-label="Ortho"><Ic><path d="M3 2v15h16M3 11h6v6" stroke={st} strokeWidth="1.600" /></Ic></StatusButton>
              <StatusButton aria-label="Polar"><Ic><circle cx="9" cy="10" r="7.500" stroke={st} strokeWidth="1.700" /><path d="M9 10h11M9 10l6-6" stroke={st} strokeWidth="1.500" /></Ic></StatusButton>
              <StatusButton aria-label="Polar options"><Down s={8} c="#000" /></StatusButton>
              <StatusButton aria-label="Isodraft"><Ic w={20} h={24}><path d="M0 2l20 20M9 0v24" stroke={st} strokeWidth="1.600" /></Ic></StatusButton>
              <StatusButton aria-label="Isodraft options"><Down s={8} c="#000" /></StatusButton>
            </StatusGroup>
            <StatusGroup $w={78}>
              <StatusButton aria-label="Object tracking"><Ic><path d="M17 2L2 17h18" stroke={on} strokeWidth="1.800" /><path d="M7 10h4v4H7z" fill={on} /></Ic></StatusButton>
              <StatusButton aria-label="Object snap"><Ic><path d="M3 3h16v16H3z" stroke={on} strokeWidth="2" /><path d="M1 1h5v5H1z" fill="#1fd01f" stroke="#111" strokeWidth="1.500" /></Ic></StatusButton>
              <StatusButton aria-label="Object snap options"><Down s={8} c="#000" /></StatusButton>
            </StatusGroup>
            <StatusGroup $w={32}><StatusButton aria-label="Lineweight display"><Ic><path d="M0 3h8M10 3h10" stroke={st} strokeWidth="2" /><path d="M0 8h20M0 12h12" stroke={st} strokeWidth="2.500" /><path d="M0 17h20" stroke={st} strokeWidth="3" /></Ic></StatusButton></StatusGroup>
            <StatusGroup $w={132}>
              <StatusButton aria-label="Annotation visibility"><Anno c={on} kind={1} /></StatusButton>
              <StatusButton aria-label="Auto scale"><Anno c={st} kind={2} /></StatusButton>
              <StatusButton aria-label="Annotation scale"><Anno c={st} /></StatusButton>
              <StatusButton>1:1<Down s={8} c="#000" /></StatusButton>
            </StatusGroup>
            <StatusGroup $w={50}>
              <StatusButton aria-label="Workspace"><Ic w={18} h={18}><circle cx="9" cy="9" r="4.500" stroke={st} strokeWidth="4" /><circle cx="9" cy="9" r="7" stroke={st} strokeWidth="2" strokeDasharray="3 2.500" /></Ic></StatusButton>
              <StatusButton aria-label="Workspace options"><Down s={8} c="#000" /></StatusButton>
            </StatusGroup>
            <StatusGroup $w={32}><StatusButton aria-label="Annotation monitor"><Ic w={18} h={18}><path d="M9 0v18M0 9h18" stroke={st} strokeWidth="2" /></Ic></StatusButton></StatusGroup>
            <StatusGroup $w={32}><StatusButton aria-label="Isolate"><Ic><path d="M1 2h8v7H1zM4 18h8l-4-6z" stroke={st} strokeWidth="1.500" /><circle cx="15" cy="8" r="4" stroke={st} strokeWidth="1.500" /></Ic></StatusButton></StatusGroup>
            <StatusGroup $w={32}><StatusButton aria-label="Hardware acceleration"><Ic><circle cx="10" cy="10" r="10" fill="#0b5cab" /><path d="M10 13l4-4" stroke="#7ab8f0" strokeWidth="1.600" /></Ic></StatusButton></StatusGroup>
            <StatusGroup $w={28}><StatusButton aria-label="Plot notification"><Ic><path d="M1 1h11l4 4v8H1z" fill="#3c5f94" /><path d="M3 3h5v4H3z" fill="#cfe2f5" /><path d="M1 12h13v7H1z" fill="#f0c928" stroke="#8f7718" /><path d="M9 14l4 4 7-9" stroke="#3fa51e" strokeWidth="3" /></Ic></StatusButton></StatusGroup>
            <StatusGroup $w={64}>
              <StatusButton aria-label="Clean screen"><Ic><path d="M1 2h18v16H1z" stroke={st} strokeWidth="1.600" /><path d="M11 9l4-4M11 5h4v4M9 11l-4 4M5 11v4h4" stroke={st} strokeWidth="1.600" /></Ic></StatusButton>
              <StatusButton aria-label="Customization"><Ic><path d="M1 4h18M1 10h18M1 16h18" stroke={st} strokeWidth="2" /></Ic></StatusButton>
            </StatusGroup>
          </StatusBar>
        </Bottom>
      </Win>

      <TaskBar>
        <Start aria-label="Start"><Ic w={33} h={33}><path d="M0 5l15-2v13H0zM16 3l17-3v16H16zM0 17h15v13L0 28zM16 17h17v16l-17-3z" fill="#fff" /></Ic></Start>
        <Task aria-label="Google Earth Pro"><Ic w={38} h={40}>
          <circle cx="19" cy="19" r="18.500" fill="#a3abb8" />
          <path d="M3 10C12 6 26 14 37 24c-1 3-2 5-4 7C24 20 14 13 1 16zM10 3c10-2 20 4 26 9C28 9 18 4 10 3zM1 24c8-2 16 4 24 12-3 2-8 2-11 1-5-4-9-6-13-9z" fill="#eef0f3" />
          <rect x="8" y="28" width="22" height="11" rx="2" fill="#2b2b2b" /><text x="19" y="37" textAnchor="middle" fontFamily="Open Sans" fontSize="10" fill="#fff">Pro</text></Ic></Task>
        <Task aria-label="SketchUp"><Ic w={36} h={38}><path d="M2 3l20-3 12 9-2 20-22 8-3-9 5-4-6-6z" fill="#e3262b" /><path d="M2 3l20-3-5 4 2 3-13 2zM7 14l10-3 8 5-1 6-5 2 1-6-7-1-6 1zM10 26l6-2 1 4-6 2z" fill="#fff" /><path d="M2 3l20-3 12 9-2 20-22 8-3-9 5-4-6-6z" stroke="#e3262b" strokeWidth="1.500" /></Ic></Task>
        <Task aria-label="Word"><Ic w={38} h={38}><path d="M4 1h34v36H1V6z" fill="#b8d2f0" stroke="#2d5fa8" strokeWidth="1.500" /><path d="M22 20l15 3v14H18z" fill="#fff" stroke="#8fb0dc" /><path d="M23 26l11 2M22 30l11 2" stroke="#7a9fd4" /><text x="17" y="26" textAnchor="middle" fontFamily="Open Sans" fontWeight="800" fontSize="25" fill="#1c50a8">W</text></Ic></Task>
        <Task aria-label="Calculator"><Ic w={28} h={38}><rect x="1" y="1" width="26" height="36" rx="2" fill="#b8d8ee" stroke="#6a9cc0" /><path d="M4 4h20v12H4z" fill="#eef6fb" stroke="#85b0cc" /><path d="M4 4h20v3H4z" fill="#f0a640" /><path d="M4 21h20M4 25.500h20M4 30h20M4 34.500h20" stroke="#5d8fb5" strokeWidth="3" strokeDasharray="3 2.500" /><path d="M21 27h4v8h-4z" fill="#f0973a" /></Ic></Task>
        <Task $state="open" aria-label="Firefox"><Ic w={38} h={38}><circle cx="19" cy="20" r="17.500" fill="#f4582c" /><path d="M24 1c2 4 1 6 4 9 9 6 8 22-4 26C36 32 34 16 26 14z" fill="#ffd23c" /><path d="M28 8c12 10 8 27-8 29 10-4 14-14 6-21z" fill="#ffb52c" /><circle cx="19" cy="20" r="9.500" fill="#1d5fd0" /><path d="M2 12c1-3 3-6 5-8 0 3 2 5 5 5 3 1 4 0 6 1l-4 5c4 0 4 3 1 5-2 2 2 8 8 5-4 7-14 5-15-4-3 0-5-4-6-9z" fill="#f2382e" /></Ic></Task>
        <Task aria-label="Photoshop"><Ic w={36} h={36}><path d="M1.500 1.500h33v33h-33z" fill="#1b1464" stroke="#6fb6f0" strokeWidth="3" /><text x="18" y="25" textAnchor="middle" fontFamily="Open Sans" fontWeight="700" fontSize="18" fill="#7fc4ff">Ps</text></Ic></Task>
        <Task $state="open" aria-label="File Explorer"><Ic w={40} h={38}><path d="M3 2h10l2 3h8l2 2h12v22H2z" fill="#f0d77c" stroke="#c8a944" /><path d="M5 3h5v3H5zM17 5h5v3h-5zM27 7h6v3h-6z" fill="#fff" /><path d="M5 3h2v2H5z" fill="#2e9e3c" /><path d="M17 5h2v2h-2z" fill="#d33" /><path d="M28 7h3v2h-3z" fill="#2c78c8" /><path d="M2 11h35v18H2z" fill="#f7e59c" /><path d="M6 37V26c0-3 1-4 4-4h19c3 0 4 1 4 4v11h-7v-8H13v8z" fill="#8fd0ea" stroke="#5ba8cc" /></Ic></Task>
        <Task $state="active" aria-label="AutoCAD"><Ic w={40} h={40}><path d="M0 0h40v40H0z" fill="#f8e9e5" /><g transform="translate(6 3) scale(.72 .7)"><LogoShape hole="#f8e9e5" /></g></Ic></Task>
        <Tray>
          <Tool $w={30} aria-label="Hidden icons"><Ic w={10} h={6}><path d="M0 6h10L5 0z" fill="#fff" /></Ic></Tool>
          <Tool aria-label="Action center"><Ic w={18} h={20}><path d="M2 0v20" stroke="#fff" strokeWidth="2" /><path d="M3 2h8v3h6l-2 4 1 3H9V10H3z" fill="#fff" stroke="#555" strokeWidth=".6" /></Ic></Tool>
          <Tool aria-label="Network"><Ic w={17} h={18}><path d="M1 18v-3M4.500 18v-6M8 18V9M11.500 18V5M15 18V1" stroke="#fff" strokeWidth="2.200" /></Ic></Tool>
          <Tool aria-label="Volume"><Ic w={16} h={20}><path d="M1 6h3l5-6v20l-5-6H1z" fill="#fff" stroke="#666" strokeWidth=".6" /><path d="M12 6c2 2 2 6 0 8" stroke="#fff" strokeWidth="1.300" /></Ic></Tool>
          <Lang>TUR</Lang>
          <Clock>12:08<br />29.12.2018</Clock>
        </Tray>
      </TaskBar>
    </Screen>
  );
}
